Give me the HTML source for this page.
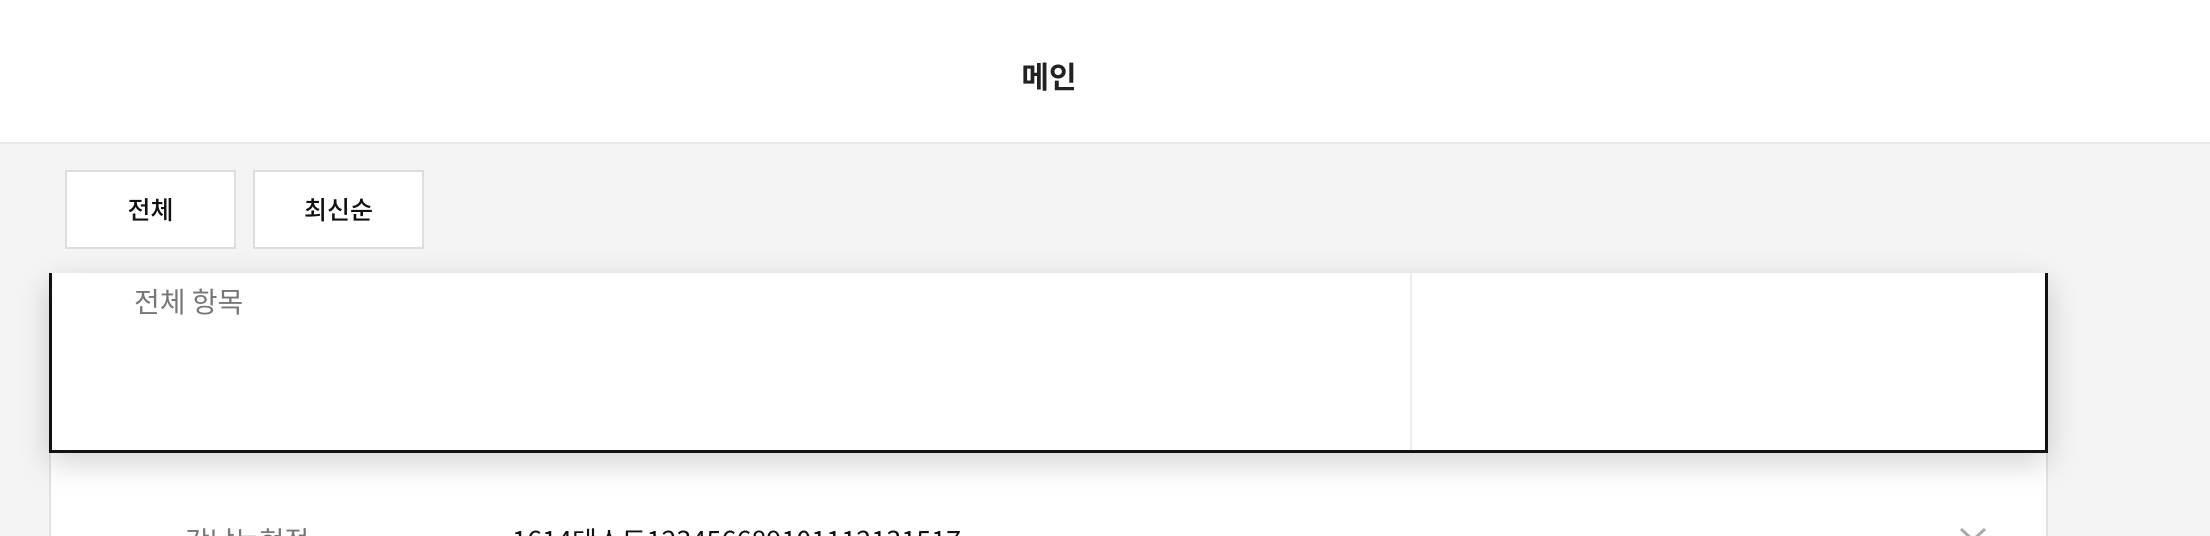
<!DOCTYPE html>
<html style="width:2210px;height:536px;overflow:hidden"><head><meta charset="utf-8"><style>
*{margin:0;padding:0;box-sizing:border-box}
body{width:2210px;height:536px;overflow:hidden;background:#f4f4f4;font-family:"Noto Sans CJK KR","Liberation Sans",sans-serif;position:relative}
.hdr{position:absolute;left:0;top:0;width:2210px;height:144px;background:#fff;border-bottom:2px solid #e8e8e8}
.hdr h1{position:absolute;left:0;width:2098px;top:52px;text-align:center;font-size:30px;font-weight:700;color:#222;line-height:46px}
.btn{position:absolute;top:170px;height:79px;width:171px;background:#fff;border:2px solid #ddd;font-size:25px;color:#111;text-align:center;line-height:75px;font-weight:500}
.card{position:absolute;left:49px;top:440px;width:1999px;height:96px;background:#fff;border-left:2px solid #e2e2e2;border-right:2px solid #e2e2e2}
.panel{position:absolute;left:49px;top:273px;width:1999px;height:180px;background:#fff;border:3px solid #111;border-top:none;box-shadow:0 10px 30px rgba(0,0,0,.18)}
.div{position:absolute;left:1358px;top:0;bottom:0;width:2px;background:#ebebeb}
.ph{position:absolute;left:82px;top:8px;font-size:28px;color:#777}
.clip{position:absolute;left:0;top:440px;width:2210px;height:96px;overflow:hidden}
.r1{position:absolute;top:80px;font-size:27px;line-height:40px}
</style></head><body>
<div class="hdr"><h1>메인</h1></div>
<div class="btn" style="left:65px">전체</div>
<div class="btn" style="left:253px">최신순</div>
<div class="card"></div>
<div class="clip">
<div class="r1" style="left:185px;color:#777">강남논현점</div>
<div class="r1" style="left:512px;color:#111">1614테스트123456689101112131517</div>
<svg style="position:absolute;left:1958px;top:86px" width="30" height="20"><path d="M3 3 L15 14 L27 3" stroke="#aaa" stroke-width="3" fill="none"/></svg>
</div>
<div class="panel"><div class="div"></div><div class="ph">전체 항목</div></div>
</body></html>
